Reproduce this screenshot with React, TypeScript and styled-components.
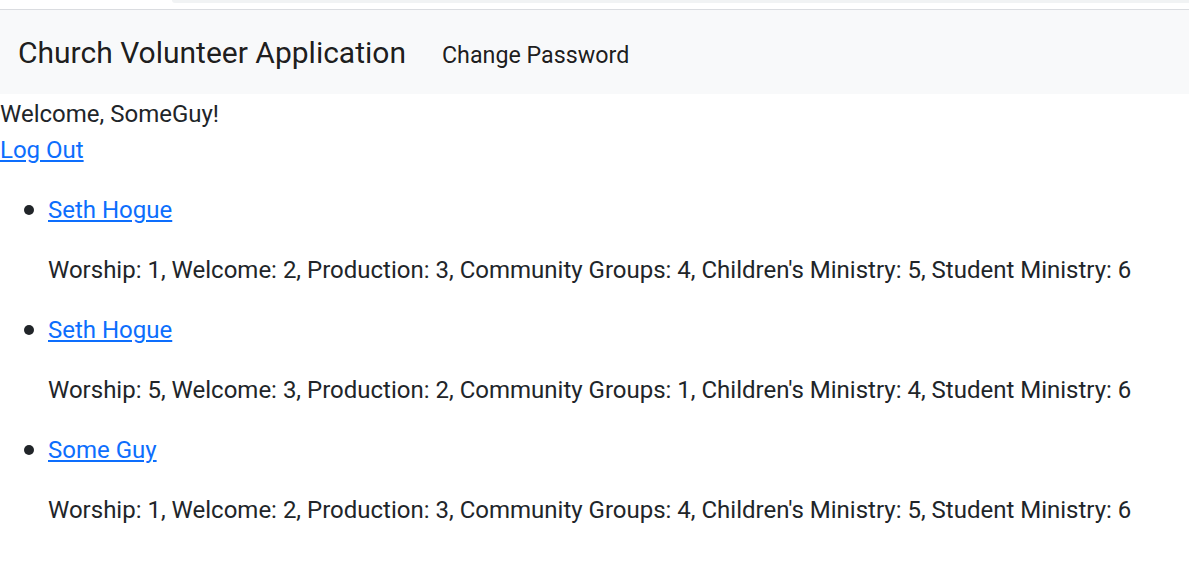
import React from "react";
import styled, { createGlobalStyle } from "styled-components";

const GlobalStyle = createGlobalStyle`
  body {
    margin: 0;
    font-family: Roboto, "Liberation Sans", sans-serif;
    font-size: 24px;
    line-height: 36px;
    color: #212529;
    background: #fff;
  }
`;

const TopStrip = styled.div`
  height: 9px;
  border-bottom: 1px solid #dadce0;
  background: #fff;
`;

const StripTab = styled.div`
  margin-left: 172px;
  height: 3px;
  background: #f1f3f4;
  border-bottom-left-radius: 8px;
`;

const Navbar = styled.nav`
  display: flex;
  align-items: baseline;
  background: #f8f9fa;
  padding: 12px 18px;
`;

const Brand = styled.a`
  font-size: 30px;
  line-height: 45px;
  padding: 7.5px 0;
  margin-right: 24px;
  color: rgba(0, 0, 0, 0.9);
  text-decoration: none;
`;

const NavLink = styled.a`
  padding: 0 12px;
  font-size: 23.25px;
  line-height: 36px;
  color: rgba(0, 0, 0, 0.9);
  text-decoration: none;
`;

const Greeting = styled.div`
  margin-top: 2px;
`;

const Link = styled.a`
  color: #0d6efd;
  text-decoration: underline;
  text-underline-offset: 2px;
`;

const VolunteerList = styled.ul`
  margin: 24px 0;
  padding-left: 48px;
  list-style: none;
`;

const Item = styled.li`
  position: relative;

  &::before {
    content: "";
    position: absolute;
    left: -24px;
    top: 13px;
    width: 10px;
    height: 10px;
    border-radius: 50%;
    background: #212529;
  }

  p {
    margin: 0 0 24px;
  }
`;

interface Volunteer {
  name: string;
  scores: [string, number][];
}

const volunteers: Volunteer[] = [
  {
    name: "Seth Hogue",
    scores: [
      ["Worship", 1],
      ["Welcome", 2],
      ["Production", 3],
      ["Community Groups", 4],
      ["Children's Ministry", 5],
      ["Student Ministry", 6],
    ],
  },
  {
    name: "Seth Hogue",
    scores: [
      ["Worship", 5],
      ["Welcome", 3],
      ["Production", 2],
      ["Community Groups", 1],
      ["Children's Ministry", 4],
      ["Student Ministry", 6],
    ],
  },
  {
    name: "Some Guy",
    scores: [
      ["Worship", 1],
      ["Welcome", 2],
      ["Production", 3],
      ["Community Groups", 4],
      ["Children's Ministry", 5],
      ["Student Ministry", 6],
    ],
  },
];

export default function App() {
  return (
    <>
      <GlobalStyle />
      <TopStrip>
        <StripTab />
      </TopStrip>
      <Navbar>
        <Brand href="#">Church Volunteer Application</Brand>
        <NavLink href="#">Change Password</NavLink>
      </Navbar>
      <Greeting>
        Welcome, SomeGuy!
        <br />
        <Link href="#">Log Out</Link>
      </Greeting>
      <VolunteerList>
        {volunteers.map((v, i) => (
          <Item key={i}>
            <p>
              <Link href="#">{v.name}</Link>
            </p>
            <p>{v.scores.map(([k, n]) => `${k}: ${n}`).join(", ")}</p>
          </Item>
        ))}
      </VolunteerList>
    </>
  );
}
